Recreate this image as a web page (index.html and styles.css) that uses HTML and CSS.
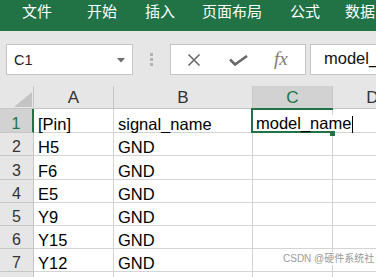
FILE: index.html
```html
<!DOCTYPE html>
<html lang="zh">
<head>
<meta charset="utf-8">
<link rel="stylesheet" href="styles.css">
</head>
<body>
<div class="app">
  <div class="ribbon">
    <span class="tab t1">文件</span>
    <span class="tab t2">开始</span>
    <span class="tab t3">插入</span>
    <span class="tab t4">页面布局</span>
    <span class="tab t5">公式</span>
    <span class="tab t6">数据</span>
  </div>
  <div class="fbar">
    <div class="namebox">
      <span class="ref">C1</span>
      <svg class="drop" width="8" height="5" viewBox="0 0 8 5"><polygon points="0,0 8,0 4,4.5" fill="#6d6d6d"/></svg>
    </div>
    <div class="grip"><i></i><i></i><i></i></div>
    <div class="fxbox">
      <svg class="ic-x" width="14" height="14" viewBox="0 0 14 14"><path d="M1.5 1.5 L12.5 12.5 M12.5 1.5 L1.5 12.5" stroke="#6a6a6a" stroke-width="1.6" fill="none"/></svg>
      <svg class="ic-ok" width="19" height="11" viewBox="0 0 19 11"><path d="M1 4.5 L6 9.5 L18 1" stroke="#6a6a6a" stroke-width="2.6" fill="none"/></svg>
      <span class="fx">fx</span>
    </div>
    <div class="finput">model_</div>
  </div>
  <div class="sheet">
    <div class="hd corner"><svg width="18" height="15" viewBox="0 0 18 15"><polygon points="18,0 18,15 0,15" fill="#c4c4c4"/></svg></div>
    <div class="hd col">A</div>
    <div class="hd col">B</div>
    <div class="hd col sel">C</div>
    <div class="hd col">D</div>

    <div class="hd row sel">1</div>
    <div class="c">[Pin]</div>
    <div class="c">signal_name</div>
    <div class="c active"><span class="edit">model_name<i class="caret"></i></span><span class="handle"></span></div>
    <div class="c"></div>

    <div class="hd row">2</div><div class="c">H5</div><div class="c">GND</div><div class="c"></div><div class="c"></div>
    <div class="hd row">3</div><div class="c">F6</div><div class="c">GND</div><div class="c"></div><div class="c"></div>
    <div class="hd row">4</div><div class="c">E5</div><div class="c">GND</div><div class="c"></div><div class="c"></div>
    <div class="hd row">5</div><div class="c">Y9</div><div class="c">GND</div><div class="c"></div><div class="c"></div>
    <div class="hd row">6</div><div class="c">Y15</div><div class="c">GND</div><div class="c"></div><div class="c"></div>
    <div class="hd row">7</div><div class="c">Y12</div><div class="c">GND</div><div class="c"></div><div class="c"></div>
    <div class="hd row"></div><div class="c"></div><div class="c"></div><div class="c"></div><div class="c"></div>
  </div>
  <div class="wm">CSDN @硬件系统社</div>
</div>
</body>
</html>
```

FILE: styles.css
```css
html, body {
  margin: 0;
  padding: 0;
  background: #ffffff;
}
.app {
  position: relative;
  width: 376px;
  height: 277px;
  overflow: hidden;
  font-family: "Liberation Sans", Arial, "Noto Sans CJK SC", sans-serif;
}
.ribbon {
  height: 31px;
  background: #217346;
  display: flex;
  align-items: flex-start;
  white-space: nowrap;
  overflow: hidden;
}
.tab {
  color: #ffffff;
  font-family: "Noto Sans CJK SC", sans-serif;
  font-size: 15px;
  line-height: 22px;
  flex: none;
}
.t1 { margin-left: 22px; }
.t2 { margin-left: 35px; }
.t3 { margin-left: 28px; }
.t4 { margin-left: 27px; }
.t5 { margin-left: 28px; }
.t6 { margin-left: 25px; }

.fbar {
  height: 55px;
  box-sizing: border-box;
  background: #e6e6e6;
  display: flex;
  align-items: flex-start;
  padding-top: 13px;
}
.namebox {
  margin-left: 6px;
  width: 127px;
  height: 31px;
  box-sizing: border-box;
  border: 1px solid #c6c6c6;
  background: #ffffff;
  display: flex;
  align-items: center;
  justify-content: space-between;
  padding: 0 7px 0 7px;
  flex: none;
}
.ref {
  font-size: 14.5px;
  color: #222222;
}
.drop { margin-top: 1px; }
.grip {
  margin-left: 17px;
  margin-top: 9px;
  display: flex;
  flex-direction: column;
  gap: 2px;
  flex: none;
}
.grip i {
  display: block;
  width: 3px;
  height: 3px;
  background: #b4b4b4;
}
.fxbox {
  margin-left: 17px;
  width: 136px;
  height: 31px;
  box-sizing: border-box;
  border: 1px solid #c6c6c6;
  background: #ffffff;
  display: flex;
  align-items: center;
  flex: none;
}
.ic-x { margin-left: 16px; }
.ic-ok { margin-left: 28px; margin-top: 2px; }
.fx {
  margin-left: 26px;
  font-family: "Liberation Serif", serif;
  font-style: italic;
  font-size: 19px;
  color: #7a7a7a;
  line-height: 20px;
  margin-top: -2px;
}
.finput {
  margin-left: 4px;
  flex: 1;
  height: 31px;
  box-sizing: border-box;
  border: 1px solid #c6c6c6;
  border-right: none;
  background: #ffffff;
  padding-left: 13px;
  font-size: 16.5px;
  line-height: 27px;
  color: #111111;
  white-space: nowrap;
  overflow: hidden;
}

.sheet {
  display: grid;
  grid-template-columns: 34px 80px 139px 80px 80px;
  grid-template-rows: 23px 24px 23px 24px 23px 23px 23px 23px 23px;
  width: 413px;
}
.sheet > div {
  box-sizing: border-box;
  border-right: 1px solid #d4d4d4;
  border-bottom: 1px solid #d4d4d4;
  display: flex;
  align-items: flex-end;
  white-space: nowrap;
  min-width: 0;
}
.sheet > .hd {
  background: #e6e6e6;
  color: #333333;
  border-right-color: #c6c6c6;
  border-bottom-color: #c6c6c6;
  justify-content: center;
}
.hd.col {
  font-size: 17px;
  line-height: 18px;
  padding-bottom: 1px;
}
.hd.row {
  font-size: 16px;
  line-height: 16px;
}
.sheet > .corner {
  justify-content: flex-end;
  padding: 0 1px 1px 0;
}
.corner svg { display: block; }
.sheet > .hd.sel {
  background: #d2d2d2;
  color: #217346;
}
.sheet > .hd.row.sel {
  border-right: 2px solid #217346;
}
.c {
  font-size: 16.5px;
  line-height: 16px;
  color: #000000;
  padding-left: 4px;
  background: #ffffff;
}
.sheet > .active {
  position: relative;
  z-index: 1;
  overflow: visible;
  padding-left: 3px;
}
.active::before {
  content: "";
  position: absolute;
  left: -2px;
  top: -1px;
  width: 82px;
  height: 25px;
  box-sizing: border-box;
  border: 2px solid #217346;
  border-right: none;
}
.edit {
  position: relative;
  z-index: 2;
  background: #ffffff;
  padding-right: 3px;
  margin-bottom: 1px;
  display: inline-flex;
  align-items: flex-end;
}
.caret {
  display: inline-block;
  width: 1px;
  height: 17px;
  background: #000000;
  margin-left: 1px;
  margin-bottom: -2px;
}
.handle {
  position: absolute;
  left: 77px;
  top: 22px;
  width: 5px;
  height: 5px;
  background: #217346;
  z-index: 3;
}
.wm {
  position: absolute;
  left: 283px;
  top: 252px;
  font-family: "Liberation Sans", "Noto Sans CJK SC", sans-serif;
  font-size: 10px;
  line-height: 13px;
  color: #9a9a9a;
  background: rgba(255,255,255,0.85);
  white-space: nowrap;
}
```
